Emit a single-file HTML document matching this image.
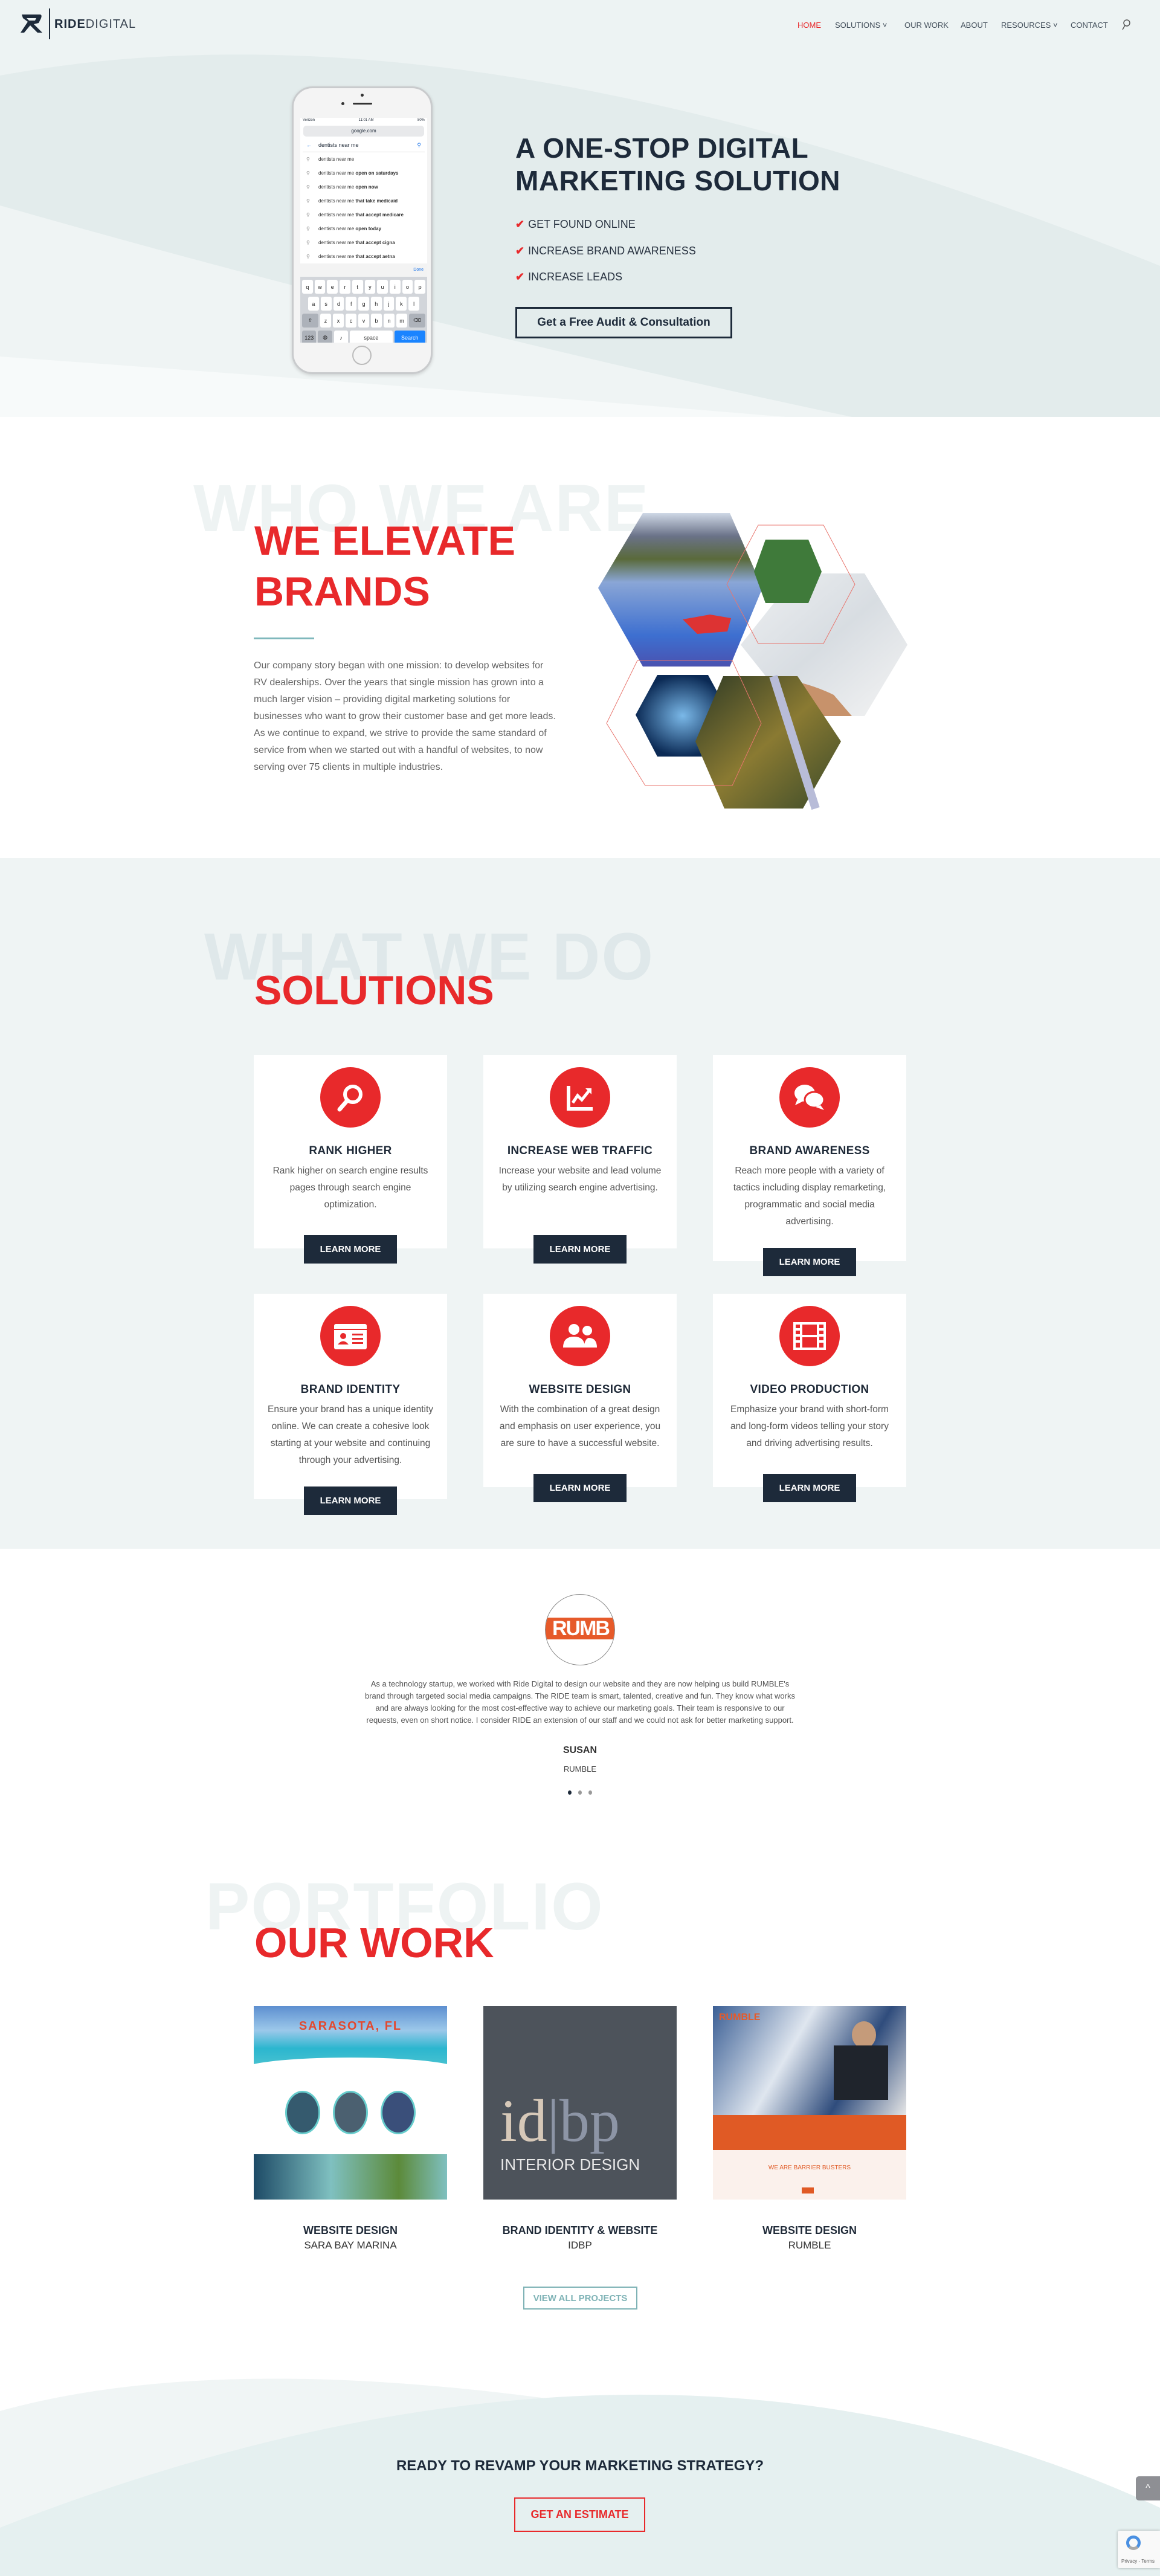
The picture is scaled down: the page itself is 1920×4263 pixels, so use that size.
<!DOCTYPE html>
<html><head><meta charset="utf-8">
<style>
*{margin:0;padding:0;box-sizing:border-box}
body{width:1920px;height:4263px;position:relative;overflow:hidden;font-family:"Liberation Sans",Arial,sans-serif;background:#fff;color:#1f2a38}
.abs{position:absolute}
.nav a{position:absolute;top:34px;font-size:13px;color:#44505c;text-decoration:none;white-space:nowrap}
.ghost{position:absolute;font-weight:bold;white-space:nowrap;letter-spacing:2px}
.red{color:#e8292b;font-weight:bold;position:absolute;white-space:nowrap}
.card{position:absolute;width:320px;background:#fff;text-align:center}
.card .ic{width:100px;height:100px;border-radius:50%;background:#e8292b;margin:20px auto 0;display:flex;align-items:center;justify-content:center}
.card h3{font-size:19px;font-weight:bold;color:#1f2a38;margin-top:28px;letter-spacing:.3px}
.card p{font-size:15.5px;line-height:28px;color:#555;margin:8px 24px 0}
.btn{position:absolute;width:154px;height:47px;background:#1d2a3a;color:#fff;font-weight:bold;font-size:15px;display:flex;align-items:center;justify-content:center}
.chk{position:absolute;left:853px;font-size:18px;color:#2a3442}
.chk b{color:#e8292b;margin-right:6px}
.sug{height:23px;font-size:8px;color:#333;padding-left:30px;position:relative;line-height:23px}
.sug:before{content:"⚲";position:absolute;left:10px;color:#888}
.kr{display:flex;gap:3px;margin:0 3px 5px}
.k{background:#fff;border-radius:3px;height:23px;flex:1;font-size:9px;display:flex;align-items:center;justify-content:center;color:#222}
.pt{position:absolute;top:3681px;width:320px;text-align:center;font-weight:bold;font-size:18px}
.ps{position:absolute;top:3706px;width:320px;text-align:center;font-size:17px;color:#333}
</style></head><body>

<div class="abs" style="left:0;top:0;width:1920px;height:690px;background:#edf3f3">
<svg width="1920" height="690" style="position:absolute;left:0;top:0">
<path d="M0,125 Q780,-20 1920,440 L1920,690 L0,690 Z" fill="#e3ecec"/>
<path d="M0,340 Q700,540 1410,690 L0,690 Z" fill="#eff4f4"/>
<path d="M0,590 Q700,640 1300,690 L0,690 Z" fill="#f7fafa"/>
</svg>
</div>
<svg class="abs" style="left:34px;top:22px" width="38" height="34" viewBox="0 0 38 34"><path d="M2,2 L32,2 Q36,2 34,8 L30,16 L22,18 L36,32 L28,32 L16,20 L6,32 L0,32 L12,14 L4,8 Z M10,8 L26,8 L24,12 L14,12 Z" fill="#1d2a3a" fill-rule="evenodd"/></svg>
<div class="abs" style="left:81px;top:14px;width:2px;height:51px;background:#1d2a3a"></div>
<div class="abs" style="left:90px;top:29px;font-size:20px;color:#1d2a3a;letter-spacing:1px"><b>RIDE</b><span style="font-weight:300;color:#3a4552">DIGITAL</span></div>
<div class="nav">
<a style="left:1320px;color:#e8292b">HOME</a>
<a style="left:1382px">SOLUTIONS ˅</a>
<a style="left:1497px">OUR WORK</a>
<a style="left:1590px">ABOUT</a>
<a style="left:1657px">RESOURCES ˅</a>
<a style="left:1772px">CONTACT</a>
</div>
<svg class="abs" style="left:1856px;top:31px" width="16" height="20"><circle cx="9" cy="7" r="5" fill="none" stroke="#555" stroke-width="1.5"/><line x1="6" y1="11" x2="2" y2="18" stroke="#555" stroke-width="1.5"/></svg>

<div class="abs" style="left:483px;top:143px;width:233px;height:476px;border-radius:34px;background:#f4f4f4;border:3px solid #c9cbcd;box-shadow:0 2px 6px rgba(0,0,0,.15)"></div>
<div class="abs" style="left:597px;top:155px;width:5px;height:5px;border-radius:50%;background:#333"></div>
<div class="abs" style="left:565px;top:169px;width:5px;height:5px;border-radius:50%;background:#333"></div>
<div class="abs" style="left:584px;top:170px;width:32px;height:3px;border-radius:2px;background:#333"></div>
<div class="abs" style="left:497px;top:195px;width:210px;height:372px;background:#fff;overflow:hidden">
 <div style="font-size:6px;height:11px;padding:1px 4px;display:flex;justify-content:space-between"><span>Verizon</span><span>11:01 AM</span><span>80%</span></div>
 <div style="margin:2px 5px;height:18px;background:#e8e9eb;border-radius:5px;font-size:8px;text-align:center;line-height:18px">google.com</div>
 <div style="height:24px;border-bottom:1px solid #ddd;margin:0 4px;font-size:9px;line-height:24px;padding-left:26px;position:relative"><span style="position:absolute;left:6px;color:#1a73e8">←</span>dentists near me<span style="position:absolute;right:6px;color:#1a73e8">⚲</span></div>
 <div class="sug">dentists near me</div><div class="sug">dentists near me <b>open on saturdays</b></div><div class="sug">dentists near me <b>open now</b></div><div class="sug">dentists near me <b>that take medicaid</b></div><div class="sug">dentists near me <b>that accept medicare</b></div><div class="sug">dentists near me <b>open today</b></div><div class="sug">dentists near me <b>that accept cigna</b></div><div class="sug">dentists near me <b>that accept aetna</b></div>
 <div style="background:#f3f3f3;height:22px;font-size:7px;color:#1a73e8;text-align:right;padding:7px 6px 0">Done</div>
 <div style="background:#d2d5da;height:120px;padding-top:5px">
  <div class="kr"><div class="k">q</div><div class="k">w</div><div class="k">e</div><div class="k">r</div><div class="k">t</div><div class="k">y</div><div class="k">u</div><div class="k">i</div><div class="k">o</div><div class="k">p</div></div>
  <div class="kr" style="margin:0 13px 5px"><div class="k">a</div><div class="k">s</div><div class="k">d</div><div class="k">f</div><div class="k">g</div><div class="k">h</div><div class="k">j</div><div class="k">k</div><div class="k">l</div></div>
  <div class="kr"><div class="k" style="background:#adb2ba;flex:1.5">⇧</div><div class="k">z</div><div class="k">x</div><div class="k">c</div><div class="k">v</div><div class="k">b</div><div class="k">n</div><div class="k">m</div><div class="k" style="background:#adb2ba;flex:1.5">⌫</div></div>
  <div class="kr"><div class="k" style="background:#adb2ba">123</div><div class="k" style="background:#adb2ba">◍</div><div class="k">♪</div><div class="k" style="flex:3">space</div><div class="k" style="flex:2.2;background:#1a84ff;color:#fff">Search</div></div>
 </div>
</div>
<div class="abs" style="left:583px;top:572px;width:32px;height:32px;border-radius:50%;border:2px solid #bbb"></div>

<div class="abs" style="left:853px;top:218px;font-size:46px;font-weight:bold;line-height:54px;color:#1d2a3a;letter-spacing:.5px">A ONE-STOP DIGITAL<br>MARKETING SOLUTION</div>
<div class="chk" style="top:361px"><b>✔</b>GET FOUND ONLINE</div>
<div class="chk" style="top:405px"><b>✔</b>INCREASE BRAND AWARENESS</div>
<div class="chk" style="top:448px"><b>✔</b>INCREASE LEADS</div>
<div class="abs" style="left:853px;top:508px;width:359px;height:52px;border:3px solid #1d2a3a;font-weight:bold;font-size:19px;display:flex;align-items:center;justify-content:center;color:#1d2a3a">Get a Free Audit &amp; Consultation</div>

<div class="ghost" style="left:320px;top:778px;font-size:110px;color:#eef3f3">WHO WE ARE</div>
<div class="red" style="left:421px;top:853px;font-size:68px;line-height:84px">WE ELEVATE<br>BRANDS</div>
<div class="abs" style="left:420px;top:1055px;width:100px;height:3px;background:#7fb8bc"></div>
<div class="abs" style="left:420px;top:1088px;width:505px;font-size:16px;line-height:28px;color:#666">Our company story began with one mission: to develop websites for RV dealerships. Over the years that single mission has grown into a much larger vision – providing digital marketing solutions for businesses who want to grow their customer base and get more leads. As we continue to expand, we strive to provide the same standard of service from when we started out with a handful of websites, to now serving over 75 clients in multiple industries.</div>
<svg class="abs" style="left:980px;top:840px" width="540" height="510">
<defs>
<linearGradient id="lk" x1="0" y1="0" x2="0" y2="1"><stop offset="0" stop-color="#cfd8e6"/><stop offset=".15" stop-color="#6a7288"/><stop offset=".3" stop-color="#5a6a3a"/><stop offset=".45" stop-color="#8aa6d6"/><stop offset=".8" stop-color="#3d6fd0"/><stop offset="1" stop-color="#4a52b0"/></linearGradient>
<linearGradient id="dc" x1="0" y1="0" x2="1" y2="1"><stop offset="0" stop-color="#eef0f2"/><stop offset=".5" stop-color="#d8dde2"/><stop offset="1" stop-color="#f4f4f4"/></linearGradient>
<linearGradient id="fr" x1="0" y1="0" x2="1" y2="1"><stop offset="0" stop-color="#2e3a25"/><stop offset=".5" stop-color="#8a7a32"/><stop offset="1" stop-color="#3a4a2a"/></linearGradient>
<radialGradient id="nt"><stop offset="0" stop-color="#7ab8e8"/><stop offset="1" stop-color="#0b2a55"/></radialGradient>
</defs>
<polygon points="246,227 340,109 451,109 522,227 451,345 340,345" fill="url(#dc)"/>
<path d="M300,280 Q360,290 400,310 L430,345 L320,345 Z" fill="#c7926b"/>
<polygon points="84,9 228,9 282,133 228,263 84,263 10,133" fill="url(#lk)"/>
<path d="M150,185 l45,-8 l35,6 l-6,22 l-50,4 Z" fill="#d33"/>
<polygon points="287,53 358,53 380,106 358,158 287,158 268,106" fill="#3f7a3a"/>
<polygon points="275,29 383,29 435,127 383,225 275,225 223,127" fill="none" stroke="#e8766e" stroke-width="1"/>
<polygon points="108,277 192,277 228,343 192,412 108,412 72,343" fill="url(#nt)"/>
<polygon points="217,279 340,279 412,387 349,498 219,498 171,387" fill="url(#fr)"/>
<path d="M300,279 L370,498" stroke="#b8bcd8" stroke-width="14"/>
<polygon points="75,253 232,253 280,357 232,460 88,460 24,357" fill="none" stroke="#e8766e" stroke-width="1"/>
</svg>

<div class="abs" style="left:0;top:1420px;width:1920px;height:1143px;background:#eff4f4"></div>
<div class="ghost" style="left:338px;top:1520px;font-size:110px;color:#dfe8ea">WHAT WE DO</div>
<div class="red" style="left:421px;top:1600px;font-size:68px">SOLUTIONS</div>

<div class="card" style="left:420px;top:1746px;height:320px"><div class="ic"><svg width="54" height="54" viewBox="0 0 54 54"><circle cx="31" cy="22" r="13" fill="none" stroke="#fff" stroke-width="6"/><line x1="22" y1="32" x2="9" y2="47" stroke="#fff" stroke-width="7" stroke-linecap="round"/></svg></div><h3>RANK HIGHER</h3><p>Rank higher on search engine results pages through search engine optimization.</p></div>
<div class="card" style="left:800px;top:1746px;height:320px"><div class="ic"><svg width="54" height="54" viewBox="0 0 54 54"><path d="M8,8 V46 H48" fill="none" stroke="#fff" stroke-width="6"/><path d="M15,36 L23,24 L30,31 L42,16" fill="none" stroke="#fff" stroke-width="5"/><path d="M36,12 L46,12 L46,22 Z" fill="#fff"/></svg></div><h3>INCREASE WEB TRAFFIC</h3><p>Increase your website and lead volume by utilizing search engine advertising.</p></div>
<div class="card" style="left:1180px;top:1746px;height:341px"><div class="ic"><svg width="60" height="54" viewBox="0 0 60 54"><ellipse cx="22" cy="20" rx="17" ry="14" fill="#fff"/><path d="M10,30 L6,40 L20,33 Z" fill="#fff"/><ellipse cx="38" cy="31" rx="16" ry="13" fill="#fff" stroke="#e8292b" stroke-width="3"/><path d="M48,40 L54,48 L40,43 Z" fill="#fff"/></svg></div><h3>BRAND AWARENESS</h3><p>Reach more people with a variety of tactics including display remarketing, programmatic and social media advertising.</p></div>
<div class="btn" style="left:503px;top:2044px">LEARN MORE</div>
<div class="btn" style="left:883px;top:2044px">LEARN MORE</div>
<div class="btn" style="left:1263px;top:2065px">LEARN MORE</div>

<div class="card" style="left:420px;top:2141px;height:340px"><div class="ic"><svg width="58" height="48" viewBox="0 0 58 48"><rect x="2" y="4" width="54" height="42" rx="3" fill="#fff"/><line x1="2" y1="13" x2="56" y2="13" stroke="#e8292b" stroke-width="2"/><circle cx="17" cy="24" r="5" fill="#e8292b"/><path d="M8,38 Q17,27 26,38 Z" fill="#e8292b"/><rect x="32" y="20" width="18" height="3" fill="#e8292b"/><rect x="32" y="27" width="18" height="3" fill="#e8292b"/><rect x="32" y="34" width="18" height="3" fill="#e8292b"/></svg></div><h3>BRAND IDENTITY</h3><p style="margin:8px 12px 0">Ensure your brand has a unique identity online. We can create a cohesive look starting at your website and continuing through your advertising.</p></div>
<div class="card" style="left:800px;top:2141px;height:320px"><div class="ic"><svg width="60" height="50" viewBox="0 0 60 50"><circle cx="20" cy="14" r="9" fill="#fff"/><circle cx="42" cy="16" r="8" fill="#fff"/><path d="M2,44 Q2,26 20,26 Q38,26 38,44 Z" fill="#fff"/><path d="M36,44 Q38,30 44,28 Q58,28 58,44 Z" fill="#fff"/></svg></div><h3>WEBSITE DESIGN</h3><p>With the combination of a great design and emphasis on user experience, you are sure to have a successful website.</p></div>
<div class="card" style="left:1180px;top:2141px;height:320px"><div class="ic"><svg width="54" height="46" viewBox="0 0 54 46"><rect x="2" y="2" width="50" height="42" fill="none" stroke="#fff" stroke-width="4"/><rect x="13" y="2" width="28" height="42" fill="none" stroke="#fff" stroke-width="4"/><line x1="13" y1="23" x2="41" y2="23" stroke="#fff" stroke-width="4"/><g fill="#fff"><rect x="4" y="10" width="7" height="4"/><rect x="4" y="20" width="7" height="4"/><rect x="4" y="30" width="7" height="4"/><rect x="43" y="10" width="7" height="4"/><rect x="43" y="20" width="7" height="4"/><rect x="43" y="30" width="7" height="4"/></g></svg></div><h3>VIDEO PRODUCTION</h3><p>Emphasize your brand with short-form and long-form videos telling your story and driving advertising results.</p></div>
<div class="btn" style="left:503px;top:2460px">LEARN MORE</div>
<div class="btn" style="left:883px;top:2439px">LEARN MORE</div>
<div class="btn" style="left:1263px;top:2439px">LEARN MORE</div>

<div class="abs" style="left:902px;top:2638px;width:116px;height:118px;border-radius:50%;border:1.5px solid #888;overflow:hidden;background:#fff">
 <div style="position:absolute;left:0;top:38px;width:116px;height:36px;background:#e65a2a;color:#fff;font-weight:bold;font-size:34px;line-height:36px;text-align:center;letter-spacing:-2px">RUMB</div>
</div>
<div class="abs" style="left:600px;top:2777px;width:720px;text-align:center;font-size:13px;line-height:20px;color:#555">As a technology startup, we worked with Ride Digital to design our website and they are now helping us build RUMBLE's brand through targeted social media campaigns. The RIDE team is smart, talented, creative and fun. They know what works and are always looking for the most cost-effective way to achieve our marketing goals. Their team is responsive to our requests, even on short notice. I consider RIDE an extension of our staff and we could not ask for better marketing support.</div>
<div class="abs" style="left:860px;top:2888px;width:200px;text-align:center;font-weight:bold;font-size:16px;color:#333">SUSAN</div>
<div class="abs" style="left:860px;top:2920px;width:200px;text-align:center;font-size:13px;color:#444">RUMBLE</div>
<div class="abs" style="left:940px;top:2963px;width:6px;height:7px;border-radius:50%;background:#1d2a3a"></div>
<div class="abs" style="left:957px;top:2963px;width:6px;height:7px;border-radius:50%;background:#999"></div>
<div class="abs" style="left:974px;top:2963px;width:6px;height:7px;border-radius:50%;background:#999"></div>

<div class="ghost" style="left:340px;top:3092px;font-size:110px;color:#eef3f3">PORTFOLIO</div>
<div class="red" style="left:421px;top:3175px;font-size:70px">OUR WORK</div>
<div class="abs" style="left:420px;top:3320px;width:320px;height:320px;overflow:hidden;background:#fff">
 <div style="height:100px;background:linear-gradient(#5d8fd0,#9cc8ea 40%,#2bb6cf 70%,#49c2d0)"></div>
 <div style="position:absolute;top:22px;width:320px;text-align:center;color:#e2492f;font-weight:bold;font-size:20px;letter-spacing:2px">SARASOTA, FL</div>
 <div style="position:absolute;top:85px;left:-20px;width:360px;height:40px;border-radius:50%;background:#fff"></div>
 <div style="position:absolute;top:140px;left:52px;width:58px;height:72px;border-radius:50%;background:#355a6e;border:3px solid #6cc"></div>
 <div style="position:absolute;top:140px;left:131px;width:58px;height:72px;border-radius:50%;background:#4b6070;border:3px solid #6cc"></div>
 <div style="position:absolute;top:140px;left:210px;width:58px;height:72px;border-radius:50%;background:#3a4f7a;border:3px solid #6cc"></div>
 <div style="position:absolute;top:245px;left:0;width:320px;height:75px;background:linear-gradient(90deg,#1d4a66,#7fc0c0 40%,#5c8a3a 75%,#7fc0c0)"></div>
</div>
<div class="abs" style="left:800px;top:3320px;width:320px;height:320px;background:#4d535b">
 <div style="position:absolute;left:28px;top:140px;font-family:'Liberation Serif',serif;font-size:100px;color:#d6c8b8;line-height:100px">id<span style="color:#8d95a6">|bp</span></div>
 <div style="position:absolute;left:28px;top:247px;font-size:26px;color:#e8e8e8">INTERIOR DESIGN</div>
</div>
<div class="abs" style="left:1180px;top:3320px;width:320px;height:320px;overflow:hidden;background:#fbf1ec">
 <div style="height:180px;background:linear-gradient(120deg,#3b5f95,#dfe6ef 40%,#2f4c7c 70%,#e6e6e6)"></div>
 <div style="position:absolute;left:230px;top:25px;width:40px;height:45px;border-radius:50%;background:#c59b7a"></div>
 <div style="position:absolute;left:200px;top:65px;width:90px;height:90px;background:#1f242c"></div>
 <div style="position:absolute;left:10px;top:10px;color:#e65a2a;font-weight:bold;font-size:16px">RUMBLE</div>
 <div style="position:absolute;top:180px;width:320px;height:58px;background:#e05a25"></div>
 <div style="position:absolute;top:262px;width:320px;text-align:center;color:#e05a25;font-size:10px">WE ARE BARRIER BUSTERS</div>
 <div style="position:absolute;left:147px;top:300px;width:20px;height:10px;background:#e05a25"></div>
</div>
<div class="pt" style="left:420px">WEBSITE DESIGN</div><div class="ps" style="left:420px">SARA BAY MARINA</div>
<div class="pt" style="left:800px">BRAND IDENTITY &amp; WEBSITE</div><div class="ps" style="left:800px">IDBP</div>
<div class="pt" style="left:1180px">WEBSITE DESIGN</div><div class="ps" style="left:1180px">RUMBLE</div>
<div class="abs" style="left:866px;top:3784px;width:189px;height:38px;border:2px solid #7fb3b6;color:#7fb3b6;font-weight:bold;font-size:15px;display:flex;align-items:center;justify-content:center">VIEW ALL PROJECTS</div>

<svg class="abs" style="left:0;top:3850px" width="1920" height="413">
<path d="M0,140 Q612,-30 1920,340 L1920,413 L0,413 Z" fill="#f0f5f5"/>
<path d="M0,333 Q1080,-90 1920,300 L1920,413 L0,413 Z" fill="#e5f0f0"/>
</svg>
<div class="abs" style="left:0;top:4067px;width:1920px;text-align:center;font-weight:bold;font-size:24px;color:#1d2a3a">READY TO REVAMP YOUR MARKETING STRATEGY?</div>
<div class="abs" style="left:851px;top:4133px;width:217px;height:57px;border:2px solid #e8292b;color:#e8292b;font-weight:bold;font-size:18px;display:flex;align-items:center;justify-content:center">GET AN ESTIMATE</div>
<div class="abs" style="left:1880px;top:4098px;width:40px;height:40px;background:#8e8f94;border-radius:5px 0 0 5px;color:#fff;text-align:center;line-height:40px;font-size:16px">^</div>
<div class="abs" style="left:1850px;top:4188px;width:70px;height:62px;background:#f9f9f9;box-shadow:0 0 4px rgba(0,0,0,.3);border-radius:3px 0 0 3px">
 <div style="position:absolute;left:14px;top:8px;width:24px;height:24px;border-radius:50%;border:5px solid #4a90e2;border-bottom-color:#aaa"></div>
 <div style="position:absolute;left:6px;top:46px;font-size:8px;color:#555">Privacy - Terms</div>
</div>
</body></html>
